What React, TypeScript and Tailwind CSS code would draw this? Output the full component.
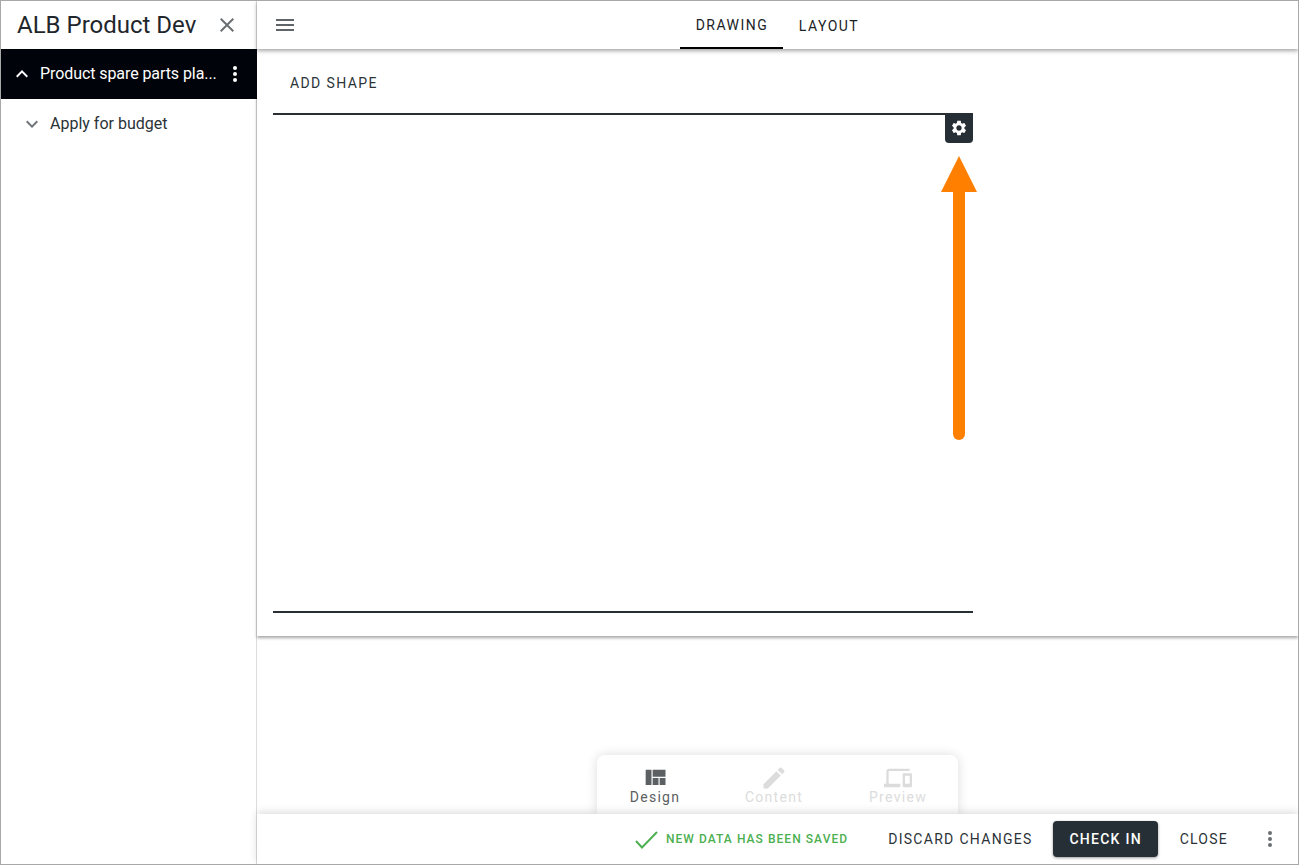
import React from "react";

const QUILT = "M10 18h5v-6h-5v6zm-6 0h5V5H4v13zm12 0h5v-6h-5v6zM10 5v6h11V5H10z";
const PENCIL = "M3 17.25V21h3.75L17.81 9.94l-3.75-3.75L3 17.25zM20.71 7.04c.39-.39.39-1.02 0-1.41l-2.34-2.34c-.39-.39-1.02-.39-1.41 0l-1.83 1.83 3.75 3.75 1.83-1.83z";
const DEVICES = "M4 6h18V4H4c-1.1 0-2 .9-2 2v11H0v3h14v-3H4V6zm19 2h-6c-.55 0-1 .45-1 1v10c0 .55.45 1 1 1h6c.55 0 1-.45 1-1V9c0-.55-.45-1-1-1zm-1 9h-4v-7h4v7z";
const GEAR = "M19.14 12.94c.04-.3.06-.61.06-.94 0-.32-.02-.64-.07-.94l2.03-1.58c.18-.14.23-.41.12-.61l-1.92-3.32c-.12-.22-.37-.29-.59-.22l-2.39.96c-.5-.38-1.03-.7-1.62-.94l-.36-2.54c-.04-.24-.24-.41-.48-.41h-3.84c-.24 0-.43.17-.47.41l-.36 2.54c-.59.24-1.13.57-1.62.94l-2.39-.96c-.22-.08-.47 0-.59.22L2.74 8.87c-.12.21-.08.47.12.61l2.03 1.58c-.05.3-.09.63-.09.94s.02.64.07.94l-2.03 1.58c-.18.14-.23.41-.12.61l1.92 3.32c.12.22.37.29.59.22l2.39-.96c.5.38 1.03.7 1.62.94l.36 2.54c.05.24.24.41.48.41h3.84c.24 0 .44-.17.47-.41l.36-2.54c.59-.24 1.13-.56 1.62-.94l2.39.96c.22.08.47 0 .59-.22l1.92-3.32c.12-.22.07-.47-.12-.61l-2.01-1.58zM12 15.6c-1.98 0-3.6-1.62-3.6-3.6s1.62-3.6 3.6-3.6 3.6 1.62 3.6 3.6-1.62 3.6-3.6 3.6z";
const CLOSE = "M19 6.41L17.59 5 12 10.59 6.41 5 5 6.41 10.59 12 5 17.59 6.41 19 12 13.41 17.59 19 19 17.59 13.41 12z";
const MENU = "M3 18h18v-2H3v2zm0-5h18v-2H3v2zm0-7v2h18V6H3z";
const EXPAND_LESS = "M12 8l-6 6 1.41 1.41L12 10.83l4.59 4.58L18 14z";
const EXPAND_MORE = "M16.59 8.59L12 13.17 7.41 8.59 6 10l6 6 6-6z";

function Icon({ d, size = 24, className }: { d: string; size?: number; className?: string }) {
  return (
    <svg width={size} height={size} viewBox="0 0 24 24" fill="currentColor" className={className} aria-hidden="true">
      <path d={d} />
    </svg>
  );
}

function Dots({ className }: { className: string }) {
  return (
    <div className={`flex flex-col items-center gap-[2px] ${className}`}>
      <span className="h-1 w-1 rounded-full bg-current" />
      <span className="h-1 w-1 rounded-full bg-current" />
      <span className="h-1 w-1 rounded-full bg-current" />
    </div>
  );
}

function ModeTab({ path, label, width, active }: { path: string; label: string; width: string; active?: boolean }) {
  return (
    <div className={`flex flex-col items-center pt-[9px] ${width} ${active ? "text-[#5c6063]" : "text-[#dcdcdc]"}`}>
      <Icon d={path} size={28} />
      <span className="mt-[-5px] text-[14px] leading-[20px] tracking-[1.3px]">{label}</span>
    </div>
  );
}

export default function App() {
  return (
    <div className="flex h-[865px] w-[1299px] overflow-hidden border border-[#a8a8a8] bg-white font-['Roboto',sans-serif] text-[#212b30]">
      {/* Sidebar */}
      <aside className="relative z-20 mr-[-1px] flex w-[256px] shrink-0 flex-col">
        <div className="flex h-[48px] items-center justify-between pl-[16px] pr-[18px]">
          <span className="text-[24px] leading-[48px] text-[#1f272c]">ALB Product Dev</span>
          <Icon d={CLOSE} className="text-[#6b6f72]" />
        </div>
        <div className="flex h-[50px] items-center bg-[#01030b] pl-[9px] pr-[20px] text-white">
          <Icon d={EXPAND_LESS} />
          <span className="ml-[6px] flex-1 text-[16px] tracking-[-0.08px]">Product spare parts pla...</span>
          <Dots className="text-white" />
        </div>
        <div className="flex h-[49px] items-center pl-[19px] text-[#2a3338]">
          <Icon d={EXPAND_MORE} className="text-[#6f7578]" />
          <span className="ml-[6px] text-[16px]">Apply for budget</span>
        </div>
      </aside>

      {/* Main */}
      <main className="flex min-w-0 flex-1 flex-col border-l border-[#dcdcdc]">
        <header className="relative z-10 flex h-[48px] shrink-0 items-center bg-white shadow-[0_2px_4px_rgba(0,0,0,0.35)]">
          <Icon d={MENU} className="ml-[16px] text-[#5f6468]" />
          <nav className="ml-[383px] flex h-full text-[14px] tracking-[1.5px] text-[#1a2226]">
            <div className="flex h-full w-[103px] items-center justify-center border-b-2 border-black pl-[1px] pt-[2px]">DRAWING</div>
            <div className="flex h-full w-[92px] items-center justify-center pt-[2px]">LAYOUT</div>
          </nav>
        </header>

        <section className="h-[587px] shrink-0 pl-[16px] shadow-[0_2px_3px_rgba(0,0,0,0.35)]">
          <div className="flex h-[64px] items-center pl-[17px] pt-[4px] text-[14px] tracking-[1.4px] text-[#2b3338]">
            ADD SHAPE
          </div>
          <div className="relative h-[500px] w-[700px] border-y-2 border-[#272f33]">
            <div className="absolute right-0 top-[-2px] flex h-[30px] w-[28px] items-center justify-center rounded-b-[4px] bg-[#272f36]">
              <Icon d={GEAR} size={18} className="text-white" />
            </div>
            {/* annotation arrow */}
            <svg className="absolute left-[667px] top-[41px]" width="38" height="286" viewBox="0 0 38 286" aria-hidden="true">
              <path d="M19 0 L37 36 L1 36 Z" fill="#ff8000" />
              <path d="M19 30 L19 278" stroke="#ff8000" strokeWidth="12" strokeLinecap="round" />
            </svg>
          </div>
        </section>

        <div className="flex flex-1 items-end pl-[340px]">
          <div className="flex h-[59px] w-[361px] rounded-t-[8px] bg-white shadow-[0_0_12px_rgba(0,0,0,0.14)]">
            <ModeTab path={QUILT} label="Design" width="w-[116px]" active />
            <ModeTab path={PENCIL} label="Content" width="w-[122px]" />
            <ModeTab path={DEVICES} label="Preview" width="w-[123px] pl-[3px]" />
          </div>
        </div>

        <footer className="relative z-10 flex h-[50px] shrink-0 items-center justify-end bg-white pr-[26px] shadow-[0_-2px_8px_rgba(0,0,0,0.14)]">
          <svg width="26" height="26" viewBox="0 0 26 26" fill="none" stroke="#4caf50" strokeWidth="1.9" aria-hidden="true">
            <path d="M2 15 L8 21.5 L23 6" />
          </svg>
          <span className="ml-[6px] text-[12px] font-medium tracking-[1.05px] text-[#4caf50]">NEW DATA HAS BEEN SAVED</span>
          <span className="ml-[40px] text-[14px] tracking-[1.3px] text-[#2b3338]">DISCARD CHANGES</span>
          <button className="ml-[20px] h-[36px] w-[105px] rounded-[4px] bg-[#272f36] pl-[1px] text-[14px] font-medium tracking-[1.25px] text-white shadow-[0_1px_3px_rgba(0,0,0,0.4)]">
            CHECK IN
          </button>
          <span className="ml-[22px] text-[14px] tracking-[1.25px] text-[#2b3338]">CLOSE</span>
          <Dots className="ml-[40px] text-[#6b6f72]" />
        </footer>
      </main>
    </div>
  );
}
